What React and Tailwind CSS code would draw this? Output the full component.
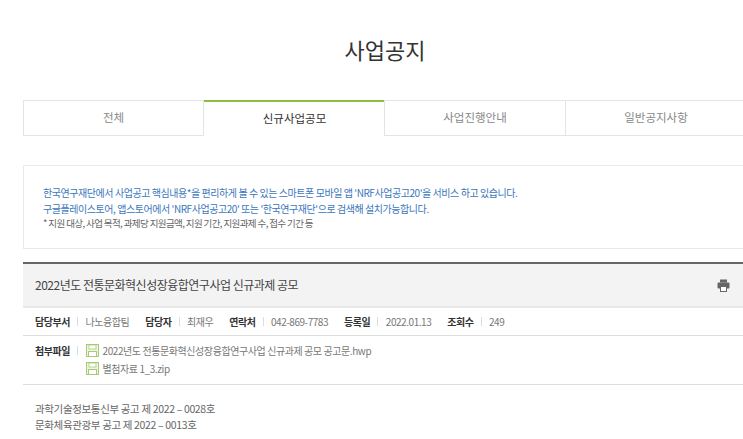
import React from 'react';

const font = { fontFamily: '"Noto Sans CJK KR", "Noto Sans", sans-serif' };

const tabs = [
  { label: '전체' },
  { label: '신규사업공모', active: true },
  { label: '사업진행안내' },
  { label: '일반공지사항' },
];

const meta = [
  { label: '담당부서', value: '나노융합팀' },
  { label: '담당자', value: '최재우' },
  { label: '연락처', value: '042-869-7783' },
  { label: '등록일', value: '2022.01.13' },
  { label: '조회수', value: '249' },
];

function Divider() {
  return <span className="ml-[7px] mr-[7.5px] h-[9px] w-px bg-[#dddddd]" />;
}

function FileIcon() {
  return (
    <svg width="13" height="13" viewBox="0 0 13 13" className="shrink-0">
      <rect x="0.5" y="0.5" width="12" height="12" fill="#eef5e2" stroke="#a6ca78" />
      <rect x="3" y="1" width="7" height="4" fill="#ffffff" stroke="#a6ca78" strokeWidth="0.8" />
      <rect x="2.5" y="7.5" width="8" height="5" fill="#ffffff" stroke="#a6ca78" />
    </svg>
  );
}

function PrintIcon() {
  return (
    <svg width="13" height="13" viewBox="0 0 13 13">
      <rect x="3" y="0.5" width="7" height="3" fill="#666666" />
      <rect x="0.5" y="3.5" width="12" height="6" rx="1" fill="#666666" />
      <rect x="3.5" y="7.5" width="6" height="5" fill="#ffffff" stroke="#666666" />
    </svg>
  );
}

export default function App() {
  return (
    <div className="h-[439px] w-[743px] overflow-hidden bg-white" style={font}>
      <div className="w-[724px] ml-[23px]">
        <h1 className="pt-[32px] text-center text-[22px] leading-[34px] text-[#333333]">사업공지</h1>

        {/* Tabs */}
        <div className="mt-[34px] grid grid-cols-4 h-[36px] text-[11.5px] text-[#888888]">
          {tabs.map(tab => (
            <div
              key={tab.label}
              className={
                tab.active
                  ? 'flex items-center justify-center border-t-2 border-[#8cbf3f] text-[#333333]'
                  : 'flex items-center justify-center border border-[#e4e4e4] -ml-px first:ml-0'
              }
            >
              {tab.label}
            </div>
          ))}
        </div>

        {/* Notice box */}
        <div className="mt-[29px] h-[84px] border border-[#eaeaea] pl-[19px] pt-[19px] text-[10px] leading-[15.5px] tracking-[-0.44px]">
          <p className="text-[#3a76bb]">한국연구재단에서 사업공고 핵심내용*을 편리하게 볼 수 있는 스마트폰 모바일 앱 'NRF사업공고20'을 서비스 하고 있습니다.</p>
          <p className="text-[#3a76bb]">구글플레이스토어, 앱스토어에서 'NRF사업공고20' 또는 '한국연구재단'으로 검색해 설치가능합니다.</p>
          <p className="text-[9.5px] tracking-[-0.6px] text-[#666666]">* 지원 대상, 사업 목적, 과제당 지원금액, 지원 기간, 지원과제 수, 접수 기간 등</p>
        </div>

        {/* Article header */}
        <div className="mt-[13px] flex h-[46px] items-center justify-between border-t-2 border-b-2 border-t-[#666666] border-b-[#e8e8e8] bg-[#f3f3f3] pl-[12px] pr-[17px]">
          <span className="text-[12px] tracking-[-0.5px] text-[#444444]">2022년도 전통문화혁신성장융합연구사업 신규과제 공모</span>
          <PrintIcon />
        </div>

        {/* Meta row */}
        <div className="flex h-[28px] items-center gap-[16px] border-b border-[#dddddd] pl-[12px] text-[10px] tracking-[-0.45px] text-[#777777]">
          {meta.map(m => (
            <div key={m.label} className="flex items-center">
              <b className="font-bold text-[#333333]">{m.label}</b>
              <Divider />
              <span>{m.value}</span>
            </div>
          ))}
        </div>

        {/* Attachments */}
        <div className="flex h-[49px] border-b border-[#dddddd] pl-[12px] pt-[5px] text-[10px] tracking-[-0.42px] text-[#777777]">
          <div className="flex h-[18px] items-center">
            <b className="font-bold tracking-[-0.45px] text-[#333333]">첨부파일</b>
            <Divider />
          </div>
          <div className="flex flex-col">
            <div className="flex h-[18px] items-center gap-[4px]">
              <FileIcon />
              <span>2022년도 전통문화혁신성장융합연구사업 신규과제 공모 공고문.hwp</span>
            </div>
            <div className="flex h-[18px] items-center gap-[4px]">
              <FileIcon />
              <span>별첨자료 1_3.zip</span>
            </div>
          </div>
        </div>

        {/* Body */}
        <div className="pl-[12px] pt-[16px] text-[10.5px] leading-[15.5px] tracking-[-0.35px] text-[#666666]">
          <p>과학기술정보통신부 공고 제 2022 – 0028호</p>
          <p>문화체육관광부 공고 제 2022 – 0013호</p>
        </div>
      </div>
    </div>
  );
}
